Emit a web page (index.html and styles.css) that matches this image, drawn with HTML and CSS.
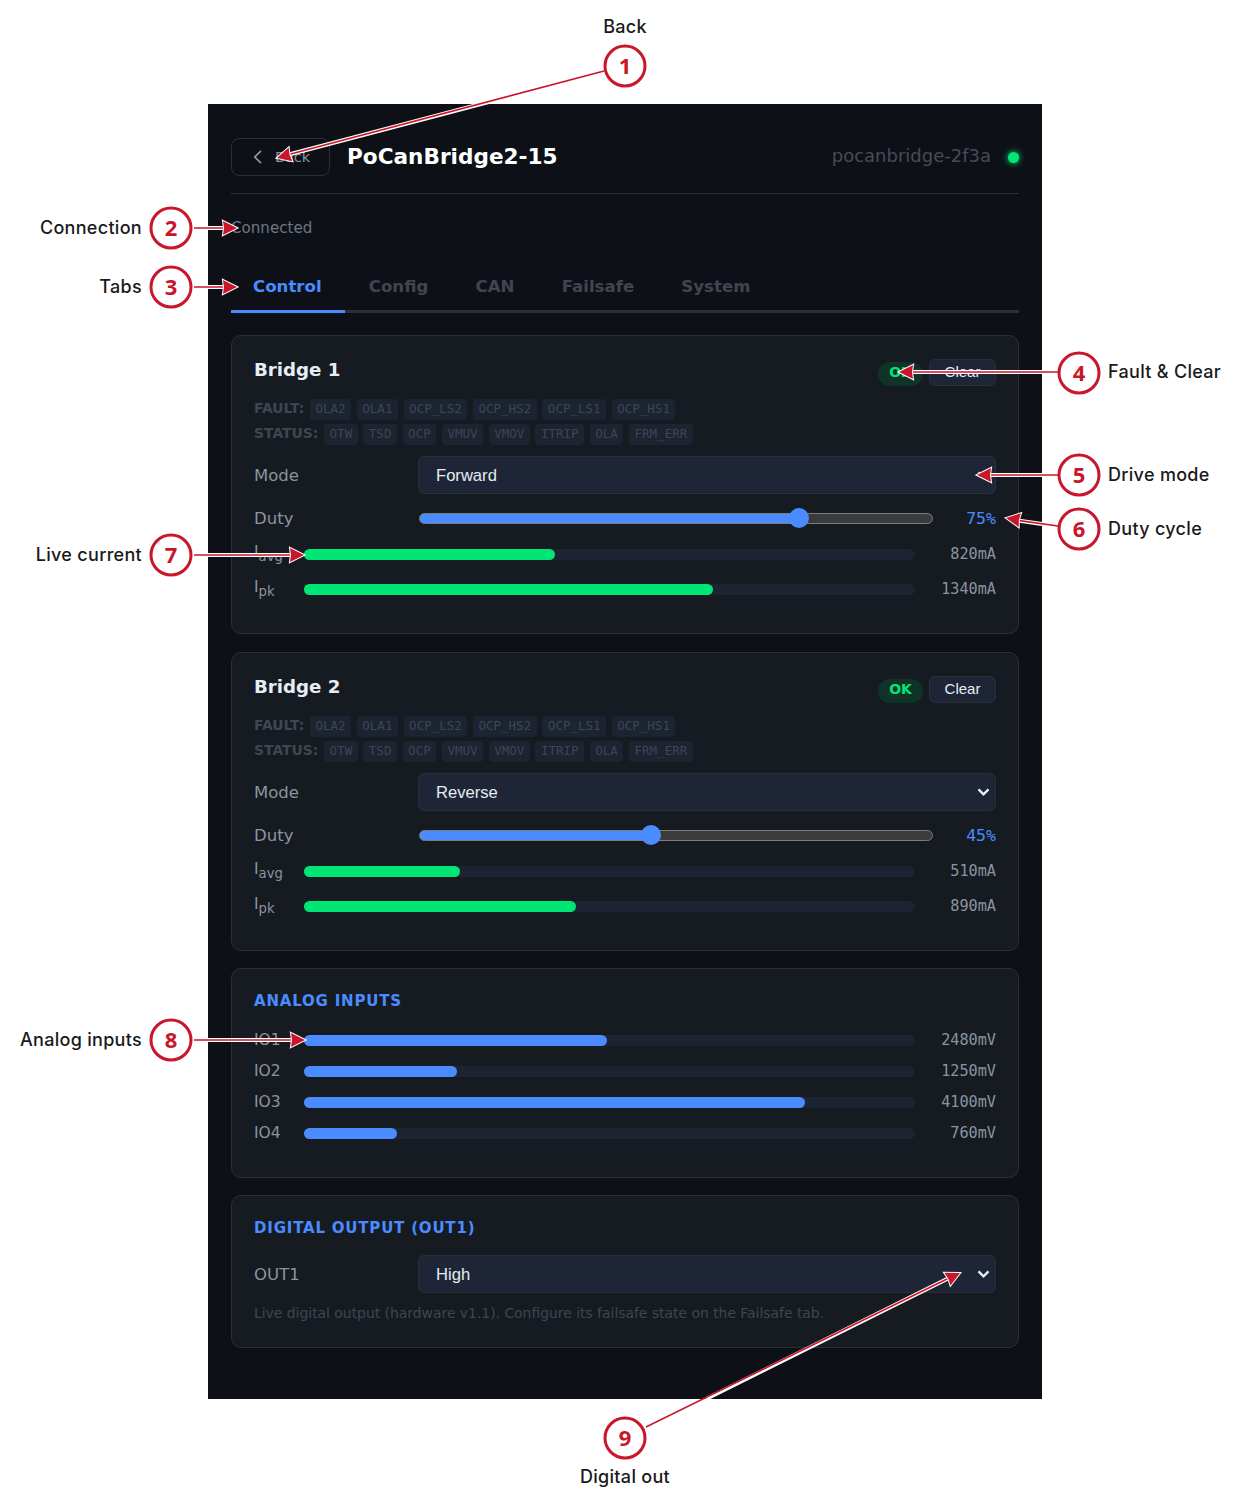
FILE: index.html
```html
<!DOCTYPE html>
<html lang="en">
<head>
    <meta charset="UTF-8">
    <meta name="viewport" content="width=device-width, initial-scale=1.0">
    <title>PoCanBridge2-15</title>
    <link rel="stylesheet" href="styles.css">
</head>
<body>
    <div class="panel">
        <header class="topbar">
            <button class="back-btn" type="button">
                <svg width="10" height="14" viewBox="0 0 10 14"><path d="M8 .8 1.8 7 8 13.2" fill="none" stroke="currentColor" stroke-width="1.7"/></svg>
                <span>Back</span>
            </button>
            <h1>PoCanBridge2-15</h1>
            <span class="host">pocanbridge-2f3a</span>
            <span class="dot"></span>
        </header>

        <div class="conn">Connected</div>

        <nav class="tabs">
            <a class="tab active">Control</a>
            <a class="tab">Config</a>
            <a class="tab">CAN</a>
            <a class="tab">Failsafe</a>
            <a class="tab">System</a>
        </nav>

        <section class="card">
            <div class="card-head">
                <h2>Bridge 1</h2>
                <span class="pill">OK</span>
                <button class="clear-btn" type="button">Clear</button>
            </div>
            <div class="flags">
                <b>FAULT:</b><i>OLA2</i><i>OLA1</i><i>OCP_LS2</i><i>OCP_HS2</i><i>OCP_LS1</i><i>OCP_HS1</i>
            </div>
            <div class="flags">
                <b>STATUS:</b><i>OTW</i><i>TSD</i><i>OCP</i><i>VMUV</i><i>VMOV</i><i>ITRIP</i><i>OLA</i><i>FRM_ERR</i>
            </div>
            <div class="field">
                <label>Mode</label>
                <select><option>Forward</option><option>Reverse</option></select>
            </div>
            <div class="field duty">
                <label>Duty</label>
                <input type="range" min="0" max="100" value="75" style="--v:.75">
                <span class="pct">75%</span>
            </div>
            <div class="meter">
                <span class="name cur">I<sub>avg</sub></span>
                <div class="track"><div class="fill green" style="width:41%"></div></div>
                <span class="val ma">820mA</span>
            </div>
            <div class="meter">
                <span class="name cur">I<sub>pk</sub></span>
                <div class="track"><div class="fill green" style="width:67%"></div></div>
                <span class="val ma">1340mA</span>
            </div>
        </section>

        <section class="card">
            <div class="card-head">
                <h2>Bridge 2</h2>
                <span class="pill">OK</span>
                <button class="clear-btn" type="button">Clear</button>
            </div>
            <div class="flags">
                <b>FAULT:</b><i>OLA2</i><i>OLA1</i><i>OCP_LS2</i><i>OCP_HS2</i><i>OCP_LS1</i><i>OCP_HS1</i>
            </div>
            <div class="flags">
                <b>STATUS:</b><i>OTW</i><i>TSD</i><i>OCP</i><i>VMUV</i><i>VMOV</i><i>ITRIP</i><i>OLA</i><i>FRM_ERR</i>
            </div>
            <div class="field">
                <label>Mode</label>
                <select><option>Reverse</option><option>Forward</option></select>
            </div>
            <div class="field duty">
                <label>Duty</label>
                <input type="range" min="0" max="100" value="45" style="--v:.45">
                <span class="pct">45%</span>
            </div>
            <div class="meter">
                <span class="name cur">I<sub>avg</sub></span>
                <div class="track"><div class="fill green" style="width:25.5%"></div></div>
                <span class="val ma">510mA</span>
            </div>
            <div class="meter">
                <span class="name cur">I<sub>pk</sub></span>
                <div class="track"><div class="fill green" style="width:44.5%"></div></div>
                <span class="val ma">890mA</span>
            </div>
        </section>

        <section class="card analog">
            <h3>ANALOG INPUTS</h3>
            <div class="meter">
                <span class="name">IO1</span>
                <div class="track"><div class="fill blue" style="width:49.6%"></div></div>
                <span class="val">2480mV</span>
            </div>
            <div class="meter">
                <span class="name">IO2</span>
                <div class="track"><div class="fill blue" style="width:25%"></div></div>
                <span class="val">1250mV</span>
            </div>
            <div class="meter">
                <span class="name">IO3</span>
                <div class="track"><div class="fill blue" style="width:82%"></div></div>
                <span class="val">4100mV</span>
            </div>
            <div class="meter">
                <span class="name">IO4</span>
                <div class="track"><div class="fill blue" style="width:15.2%"></div></div>
                <span class="val">760mV</span>
            </div>
        </section>

        <section class="card digital">
            <h3>DIGITAL OUTPUT (OUT1)</h3>
            <div class="field">
                <label>OUT1</label>
                <select><option>High</option><option>Low</option></select>
            </div>
            <p class="hint">Live digital output (hardware v1.1). Configure its failsafe state on the Failsafe tab.</p>
        </section>
    </div>

    <!-- callouts drawn over the screenshot -->
    <svg class="notes" width="1250" height="1503" viewBox="0 0 1250 1503">
        <path class="halo" d="M500 99 287 155M208 228H228M208 287H228M1042 372H908M1042 475H986M1042 524 1015 520M208 555H295M208 1040H296M706 1399 951 1277"/>
        <path class="line" d="M604 71 287 155M194 228H228M194 287H228M1058 372H908M1058 475H986M1058 526 1015 520M194 555H295M194 1040H296M646 1427 951 1277"/>
        <g class="heads">
            <path transform="translate(277 158) rotate(165)" d="M0 0-14-7-13 0-14 7Z"/>
            <path transform="translate(237 228)" d="M0 0-14-7-13 0-14 7Z"/>
            <path transform="translate(237 287)" d="M0 0-14-7-13 0-14 7Z"/>
            <path transform="translate(899 372) rotate(180)" d="M0 0-14-7-13 0-14 7Z"/>
            <path transform="translate(977 475) rotate(180)" d="M0 0-14-7-13 0-14 7Z"/>
            <path transform="translate(1006 518) rotate(189)" d="M0 0-14-7-13 0-14 7Z"/>
            <path transform="translate(304 555)" d="M0 0-14-7-13 0-14 7Z"/>
            <path transform="translate(305 1040)" d="M0 0-14-7-13 0-14 7Z"/>
            <path transform="translate(960 1273) rotate(-26)" d="M0 0-14-7-13 0-14 7Z"/>
        </g>
        <g class="rings">
            <circle cx="625" cy="66" r="20"/>
            <circle cx="171" cy="228" r="20"/>
            <circle cx="171" cy="287" r="20"/>
            <circle cx="1079" cy="373" r="20"/>
            <circle cx="1079" cy="475" r="20"/>
            <circle cx="1079" cy="529" r="20"/>
            <circle cx="171" cy="555" r="20"/>
            <circle cx="171" cy="1040" r="20"/>
            <circle cx="625" cy="1438" r="20"/>
        </g>
        <g class="nums">
            <text x="625" y="74">1</text>
            <text x="171" y="236">2</text>
            <text x="171" y="295">3</text>
            <text x="1079" y="381">4</text>
            <text x="1079" y="483">5</text>
            <text x="1079" y="537">6</text>
            <text x="171" y="563">7</text>
            <text x="171" y="1048">8</text>
            <text x="625" y="1446">9</text>
        </g>
        <g class="labels">
            <text x="625" y="33" text-anchor="middle">Back</text>
            <text x="142" y="234" text-anchor="end">Connection</text>
            <text x="142" y="293" text-anchor="end">Tabs</text>
            <text x="1108" y="378">Fault &amp; Clear</text>
            <text x="1108" y="481">Drive mode</text>
            <text x="1108" y="535">Duty cycle</text>
            <text x="142" y="561" text-anchor="end">Live current</text>
            <text x="142" y="1046" text-anchor="end">Analog inputs</text>
            <text x="625" y="1483" text-anchor="middle">Digital out</text>
        </g>
    </svg>
</body>
</html>
```

FILE: styles.css
```css
* {
    box-sizing: border-box;
}
html, body {
    margin: 0;
    background: #fff;
}
body {
    position: relative;
    height: 1503px;
    overflow: hidden;
    padding-top: 104px;
    font-family: "DejaVu Sans", sans-serif;
}
.panel {
    width: 834px;
    height: 1295px;
    margin-left: 208px;
    padding: 34px 23px 0;
    background: #0d1117;
    color: #e6edf3;
}

/* top bar */
.topbar {
    display: flex;
    align-items: center;
    height: 56px;
    padding-bottom: 17px;
    border-bottom: 1px solid #2a2f38;
}
.back-btn {
    display: flex;
    align-items: center;
    gap: 12px;
    width: 99px;
    height: 38px;
    margin-right: 17px;
    padding: 0 0 0 21px;
    background: transparent;
    border: 1px solid #2a2f38;
    border-radius: 8px;
    color: #8b949e;
    font: 14.5px "DejaVu Sans", sans-serif;
}
.topbar h1 {
    margin: 0;
    padding-bottom: 2px;
    font-size: 21.6px;
    font-weight: 700;
    color: #fff;
}
.host {
    margin-left: auto;
    padding-bottom: 4px;
    font-size: 18px;
    color: #454c58;
}
.dot {
    width: 11px;
    height: 11px;
    margin-left: 17px;
    border-radius: 50%;
    background: #00e676;
    box-shadow: 0 0 6px #00e676;
}

.conn {
    margin-top: 25px;
    height: 19px;
    font-size: 15.1px;
    line-height: 19px;
    color: #6e7681;
}

/* tabs */
.tabs {
    display: flex;
    height: 60px;
    margin-top: 15px;
    border-bottom: 3px solid #2a2f38;
}
.tab {
    height: 60px;
    padding: 25px 23.6px 0;
    font-size: 16.6px;
    line-height: 18px;
    font-weight: 700;
    color: #3f4652;
}
.tab:first-child {
    padding-left: 22px;
}
.tab.active {
    color: #4a8cff;
    border-bottom: 3px solid #4a8cff;
}

/* cards */
.card {
    height: 299px;
    margin-top: 22px;
    padding: 23px 22px 0;
    background: #161b22;
    border: 1px solid #2a2f38;
    border-radius: 10px;
}
.card + .card {
    margin-top: 18px;
}
.card-head {
    display: flex;
    align-items: center;
    height: 27px;
    margin-bottom: 13px;
}
.card-head h2 {
    margin: 0 auto 0 0;
    padding-bottom: 6px;
    font-size: 18.2px;
    font-weight: 700;
    color: #e6edf3;
}
.pill {
    width: 45px;
    height: 24px;
    margin: 2px 6px 0 0;
    border-radius: 12px;
    background: #0f3327;
    color: #00e676;
    font-size: 14px;
    font-weight: 700;
    line-height: 21px;
    text-align: center;
}
.clear-btn {
    width: 67px;
    height: 27px;
    padding: 0 0 2px;
    background: #1e2536;
    border: 1px solid #2a2f38;
    border-radius: 6px;
    color: #e6edf3;
    font: 15px "Liberation Sans", sans-serif;
}
.flags {
    display: flex;
    align-items: center;
    gap: 5.7px;
    height: 21px;
    margin-bottom: 4px;
}
.flags b {
    padding-bottom: 3px;
    font-size: 13.9px;
    color: #3f4652;
}
.flags i {
    height: 21px;
    padding: 0 5.5px;
    background: #1c2331;
    border-radius: 4px;
    font: 12.5px/19px "DejaVu Sans Mono", monospace;
    color: #3f4652;
}
.field {
    display: flex;
    align-items: center;
    height: 38px;
    margin-top: 11px;
}
.field label {
    width: 164px;
    flex: none;
    font-size: 16.5px;
    color: #8b949e;
}
.field select {
    appearance: none;
    flex: 1;
    height: 38px;
    padding: 0 17px;
    background: #1e2536 url("data:image/svg+xml,%3Csvg xmlns='http://www.w3.org/2000/svg' width='13' height='8'%3E%3Cpath d='M1.5 1.3 6.5 6.3 11.5 1.3' fill='none' stroke='%23e6edf3' stroke-width='2.4'/%3E%3C/svg%3E") no-repeat right 5px center;
    border: 1px solid #2a2f38;
    border-radius: 6px;
    color: #e6edf3;
    font: 16.6px "Liberation Sans", sans-serif;
}
.field.duty {
    height: 16px;
    margin-top: 16px;
    margin-bottom: 16.5px;
}
.duty input {
    appearance: none;
    flex: 1;
    height: 20px;
    margin: 0 33px 0 1px;
    background: transparent;
}
.duty input::-webkit-slider-runnable-track {
    height: 11px;
    border: 1px solid #7d7d7d;
    border-radius: 6px;
    background: linear-gradient(to right, #4a8cff calc(10px + (100% - 20px) * var(--v)), #3b3b3b 0);
}
.duty input::-webkit-slider-thumb {
    appearance: none;
    width: 20px;
    height: 20px;
    margin-top: -5.5px;
    border-radius: 50%;
    background: #4a8cff;
}
.pct {
    width: 30px;
    flex: none;
    text-align: right;
    font: 16.5px "DejaVu Sans Mono", monospace;
    color: #4a8cff;
}
.meter {
    display: flex;
    align-items: center;
    height: 24px;
    margin-bottom: 11px;
}
.meter .name {
    width: 50px;
    flex: none;
    font-size: 15.5px;
    color: #8b949e;
}
.meter .name.cur {
    padding-bottom: 5px;
}
.meter sub {
    font-size: 13.2px;
    line-height: 0;
}
.track {
    flex: 1;
    height: 11px;
    background: #1c2331;
    border-radius: 6px;
}
.fill {
    height: 100%;
    border-radius: 6px;
}
.fill.green {
    background: #00e676;
}
.fill.blue {
    background: #4a8cff;
}
.val {
    width: 81px;
    flex: none;
    text-align: right;
    font: 15.2px "DejaVu Sans Mono", monospace;
    color: #8b949e;
}
.val.ma {
    padding-bottom: 2px;
}
.card h3 {
    margin: 0;
    height: 18px;
    font-size: 15px;
    line-height: 18px;
    font-weight: 700;
    letter-spacing: .8px;
    color: #4a8cff;
}
.card.analog {
    height: 210px;
    margin-top: 17px;
}
.analog h3 {
    margin-bottom: 18px;
}
.analog .meter {
    margin-bottom: 7px;
}
.card.digital {
    height: 153px;
    margin-top: 17px;
}
.digital .field {
    margin-top: 18px;
}
.hint {
    margin: 12px 0 0;
    font-size: 13.9px;
    line-height: 16px;
    color: #3f4652;
}

/* callouts */
.notes {
    position: absolute;
    left: 0;
    top: 0;
}
.halo {
    fill: none;
    stroke: #fff;
    stroke-width: 4;
}
.line {
    fill: none;
    stroke: #c9162b;
    stroke-width: 1.6;
}
.heads path {
    fill: #c9162b;
    stroke: #fff;
    stroke-width: 2;
    paint-order: stroke;
}
.rings {
    fill: #fff;
    stroke: #c9162b;
    stroke-width: 3;
}
.nums {
    fill: #c9162b;
    font: 700 22px "Open Sans", sans-serif;
    text-anchor: middle;
}
.labels {
    fill: #1a1a1a;
    font: 500 18px "Inter", sans-serif;
    letter-spacing: .3px;
}
```
